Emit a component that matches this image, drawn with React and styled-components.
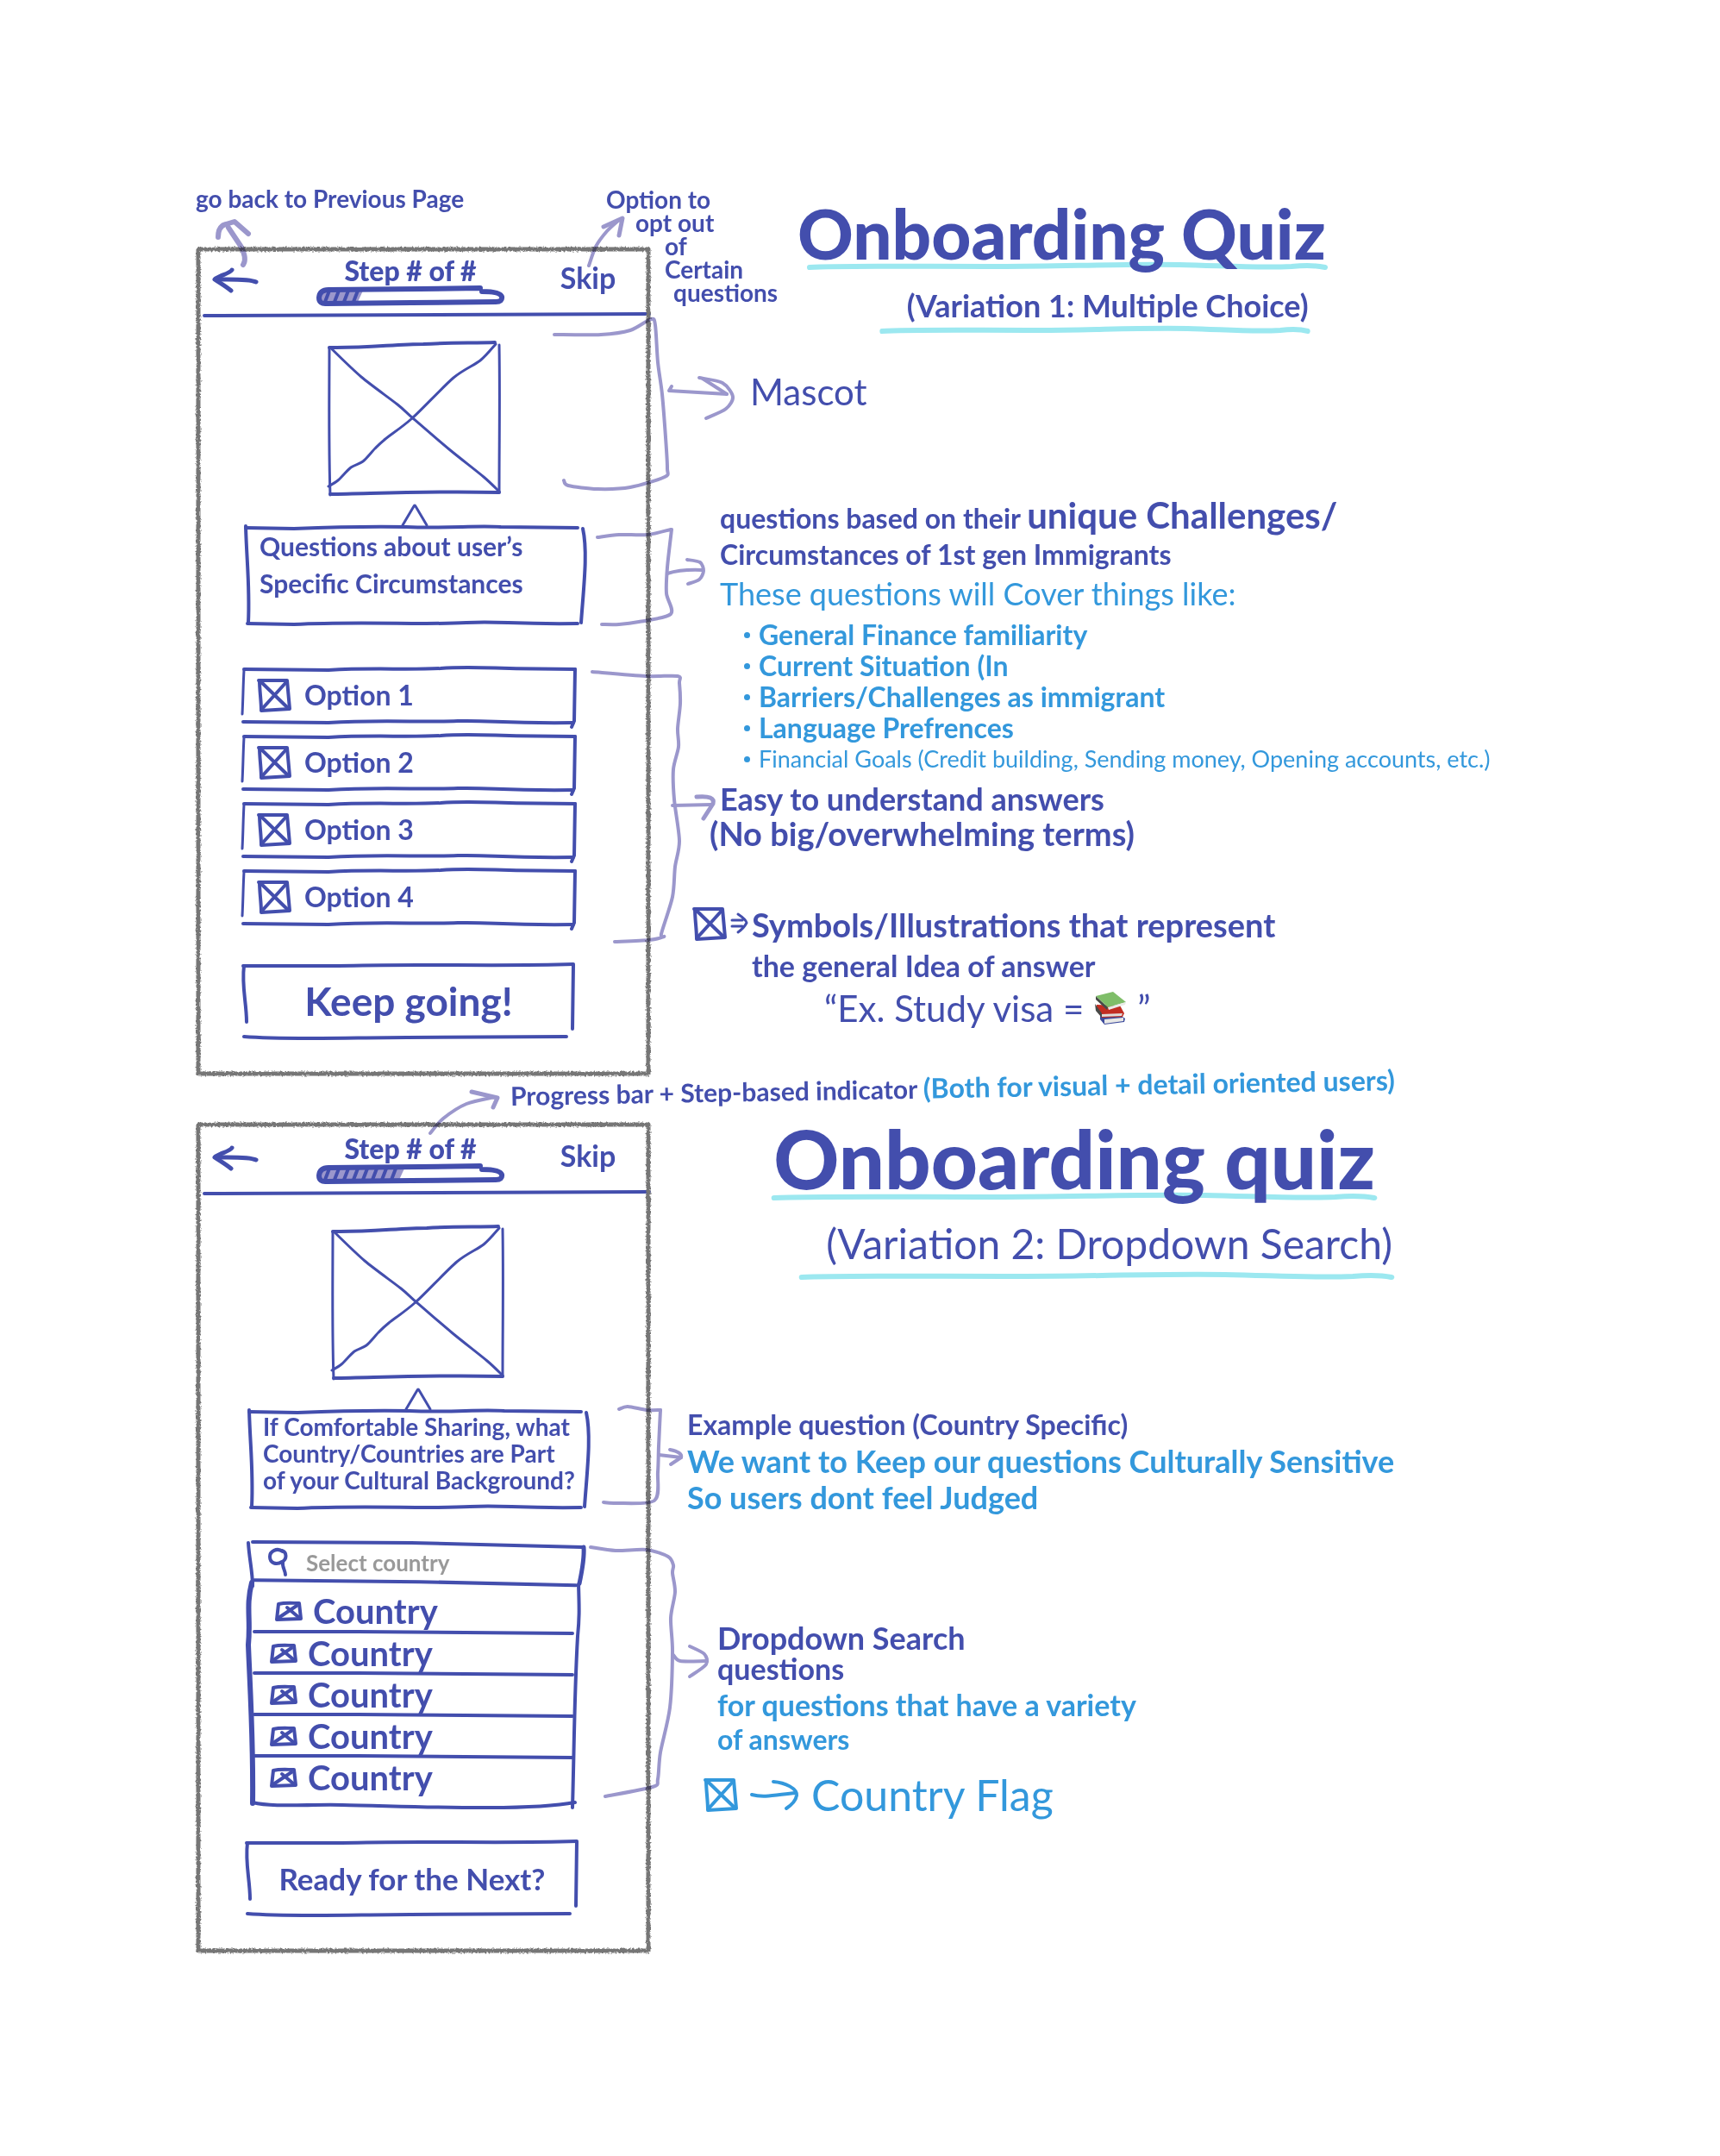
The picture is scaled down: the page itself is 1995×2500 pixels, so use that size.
import React from "react";
import styled, { createGlobalStyle, css } from "styled-components";

const ink = "#434ead";
const sky = "#3398dc";
const lilac = "#9b97cc";
const aqua = "#9ce8f0";

const GlobalStyle = createGlobalStyle`
  *, *::before, *::after { box-sizing: border-box; }
  body {
    margin: 0;
    background: #fff;
    color: ${ink};
    font-family: Lato, "Open Sans", sans-serif;
    font-weight: 700;
  }
  h1, h2, p, ul { margin: 0; padding: 0; font-weight: inherit; }
  ul { list-style: none; }
  button, input { font: inherit; color: inherit; background: none; border: 0; padding: 0; }
  button { cursor: pointer; }
  svg { display: block; overflow: visible; fill: none; stroke-linecap: round; stroke-linejoin: round; }
`;

/* Turns a list of points into one flowing pen stroke. */
function stroke(points) {
  let d = `M${points[0][0]} ${points[0][1]}`;
  for (let i = 0; i < points.length - 1; i++) {
    const a = points[i - 1] || points[i];
    const b = points[i];
    const c = points[i + 1];
    const e = points[i + 2] || c;
    d += ` C${b[0] + (c[0] - a[0]) / 7} ${b[1] + (c[1] - a[1]) / 7} ${c[0] - (e[0] - b[0]) / 7} ${c[1] - (e[1] - b[1]) / 7} ${c[0]} ${c[1]}`;
  }
  return d;
}

const Board = styled.main`
  min-width: 1760px;
  padding: 206px 120px 237px 227px;
`;

const Variation = styled.section`
  position: relative;
  display: grid;
  grid-template-columns: 528px minmax(0, 1fr);
`;

const PhoneColumn = styled.div`
  display: flex;
  flex-direction: column;
`;

const Notes = styled.div`
  display: flex;
  flex-direction: column;
  align-items: flex-start;
  white-space: nowrap;
`;

const Marks = styled.svg`
  position: absolute;
  top: 0;
  left: 0;
  pointer-events: none;
  mix-blend-mode: multiply;
`;

/* ---------- phone ---------- */

const PhoneShell = styled.article`
  position: relative;
  padding-bottom: 44px;
`;

const Outline = styled.svg`
  position: absolute;
  inset: 0;
  width: 100%;
  height: 100%;
  pointer-events: none;
`;

const TopBar = styled.header`
  display: grid;
  grid-template-columns: 52px 1fr 70px;
  align-items: start;
  padding: ${(p) => (p.$roomy ? 21 : 18)}px 38px 8px 20px;
`;

const BackButton = styled.button`
  margin-top: 8px;
`;

const SkipButton = styled.button`
  margin-top: 4px;
  font-size: 34px;
  line-height: 28px;
`;

const StepGroup = styled.div`
  display: flex;
  flex-direction: column;
  align-items: center;
  gap: 8px;
  padding-left: 6px;
`;

const StepText = styled.p`
  font-size: 32px;
  line-height: 20px;
  font-weight: 900;
`;

const HeaderRule = styled.svg`
  width: calc(100% - 10px);
  height: 4px;
  margin-left: 9px;
`;

const Body = styled.div`
  display: flex;
  flex-direction: column;
  align-items: center;
  padding: ${(p) => (p.$roomy ? "37px 70px 0 58px" : "30px 74px 0 54px")};
`;

const Pointer = styled.svg`
  margin-top: 10px;
`;

const Speech = styled.div`
  position: relative;
  width: 100%;
  height: 114px;
  padding: ${(p) => (p.$small ? "4px 20px" : "2px 20px")};
  font-size: ${(p) => (p.$small ? 28 : 30)}px;
  line-height: ${(p) => (p.$small ? 31 : 43)}px;
  white-space: nowrap;
`;

const Options = styled.ul`
  display: flex;
  flex-direction: column;
  gap: 14px;
  width: 388px;
  margin: 50px 12px 46px 0;
`;

const OptionButton = styled.button`
  position: relative;
  display: flex;
  align-items: center;
  gap: 16px;
  width: 100%;
  height: 64px;
  padding: 0 18px;
  font-size: 32px;
  line-height: 40px;
`;

const ActionButton = styled.button`
  position: relative;
  width: 384px;
  height: 86px;
  margin-right: 14px;
  font-size: ${(p) => p.$size}px;
  line-height: 48px;
  text-align: center;
`;

const Dropdown = styled.div`
  position: relative;
  width: 392px;
  margin: 38px 4px 42px 0;
`;

const SearchField = styled.label`
  display: flex;
  align-items: center;
  gap: 20px;
  height: 49px;
  padding: 0 24px;
`;

const SearchInput = styled.input`
  width: 260px;
  font-size: 26px;
  line-height: 32px;
  outline: 0;
  &::placeholder { color: #999; opacity: 1; }
`;

const Countries = styled.ul`
  padding-bottom: 8px;
`;

const CountryItem = styled.li`
  position: relative;
  height: 48px;
  padding-left: 26px;
  &:first-child { height: 57px; padding-left: 32px; padding-top: 8px; }
`;

const CountryButton = styled.button`
  display: flex;
  align-items: center;
  gap: 12px;
  height: 48px;
  font-size: 40px;
  line-height: 48px;
`;

const RowRule = styled.svg`
  position: absolute;
  left: 8px;
  bottom: -2px;
  width: 370px;
  height: 4px;
`;

/* ---------- notes ---------- */

const BackNote = styled.p`
  height: 80px;
  padding-top: 6px;
  font-size: 28px;
  line-height: 36px;
`;

const HeadRow = styled.div`
  display: flex;
`;

const SkipNote = styled.p`
  width: 222px;
  margin-left: -52px;
  padding-top: 12px;
  font-size: 28px;
  line-height: 27px;
`;

const SkipLine = styled.span`
  display: block;
  padding-left: ${(p) => p.$indent}px;
`;

const TitleBlock = styled.div`
  display: flex;
  flex-direction: column;
  align-items: flex-end;
  padding-top: ${(p) => (p.$large ? 0 : 28)}px;
  padding-left: ${(p) => (p.$large ? 142 : 0)}px;
`;

const Title = styled.h1`
  position: relative;
  z-index: 1;
  font-weight: 900;
  font-size: ${(p) => (p.$large ? 94 : 80)}px;
  line-height: ${(p) => (p.$large ? 84 : 72)}px;
`;

const SubtitleBlock = styled.div`
  display: flex;
  flex-direction: column;
  align-items: flex-end;
  margin-top: 16px;
  margin-right: ${(p) => (p.$large ? -20 : 20)}px;
`;

const Subtitle = styled.h2`
  position: relative;
  z-index: 1;
  font-size: ${(p) => (p.$large ? 48 : 36)}px;
  line-height: ${(p) => (p.$large ? 70 : 52)}px;
  font-weight: ${(p) => (p.$large ? 400 : 700)};
`;

const UnderlineSvg = styled.svg`
  width: ${(p) => p.$width}px;
  height: 6px;
`;

const Note = styled.div`
  margin-top: ${(p) => p.$space}px;
  padding-left: ${(p) => p.$indent}px;
`;

const Line = styled.p`
  font-size: ${(p) => p.$size}px;
  line-height: ${(p) => p.$leading}px;
  ${(p) => p.$sky && css`color: ${sky};`}
  ${(p) => p.$light && css`font-weight: 400;`}
`;

const Bigger = styled.span`
  font-size: 42px;
`;

const Topics = styled.ul`
  margin-top: 6px;
  padding-left: 108px;
  color: ${sky};
`;

const Topic = styled.li`
  display: flex;
  align-items: center;
  gap: 10px;
  font-size: ${(p) => (p.$small ? 27 : 32)}px;
  font-weight: ${(p) => (p.$small ? 400 : 700)};
  line-height: 36px;
  &::before {
    content: "";
    width: 7px;
    height: 7px;
    border-radius: 50%;
    background: ${sky};
  }
`;

const SymbolNote = styled.div`
  display: grid;
  grid-template-columns: 40px 20px auto;
  column-gap: 4px;
  margin-top: 62px;
  padding-left: 49px;
  svg { margin-top: 4px; }
`;

const Example = styled.p`
  display: flex;
  align-items: center;
  gap: 12px;
  padding-left: 84px;
  font-size: 42px;
  line-height: 50px;
  font-weight: 400;
  svg { margin-top: 0; }
`;

const FlagNote = styled.p`
  display: flex;
  align-items: center;
  gap: 16px;
  margin-top: 16px;
  padding-left: 62px;
  color: ${sky};
  font-size: 50px;
  line-height: 56px;
  font-weight: 400;
`;

const ProgressNote = styled.p`
  height: 53px;
  padding: 4px 0 0 365px;
  font-size: 30px;
  line-height: 36px;
  white-space: nowrap;
  transform: rotate(-1deg);
  transform-origin: 365px 22px;
`;

const SkyText = styled.span`
  color: ${sky};
  font-size: 32px;
`;

/* ---------- drawings ---------- */

function PencilFrame() {
  return (
    <Outline viewBox="0 0 528 962" preserveAspectRatio="none" aria-hidden="true">
      <defs>
        <filter id="pencil" x="-2%" y="-2%" width="104%" height="104%">
          <feTurbulence type="fractalNoise" baseFrequency="0.45" numOctaves="2" seed="4" result="n" />
          <feDisplacementMap in="SourceGraphic" in2="n" scale="4" />
        </filter>
      </defs>
      <rect x="3" y="3" width="522" height="956" stroke="#767676" strokeWidth="5" filter="url(#pencil)" />
    </Outline>
  );
}

function BoxSketch({ kind }) {
  const shapes = {
    speech: [
      [4, "M4 2 L60 3 C110 1 140 0 190 1 C240 3 270 -1 300 1 L389 2"],
      [4, "M4 0 C5 40 9 70 7 112"],
      [4, "M395 3 C401 30 396 70 393 112"],
      [4, "M6 113 L60 114 C140 110 210 115 260 112 C300 110 310 114 389 113"],
    ],
    option: [
      [4, "M2 2 L100 3 C150 0 190 3 230 1 C270 -2 290 2 386 2"],
      [3, "M2 3 C1 20 1 35 0 54"],
      [4, "M386 2 L385 62 L382 69"],
      [4, "M1 63 L100 64 C160 60 210 64 250 62 C290 61 300 65 384 64"],
    ],
    action: [
      [4, "M0 2 L110 2 C200 -1 290 3 383 0"],
      [4, "M1 2 C-2 25 4 45 4 67"],
      [4, "M383 1 L382 75"],
      [4, "M1 84 C50 88 130 85 190 85 L375 84"],
    ],
  };
  const box = { speech: "0 0 400 114", option: "0 0 388 64", action: "0 0 384 86" }[kind];
  return (
    <Outline viewBox={box} preserveAspectRatio="none" stroke={ink} aria-hidden="true">
      {shapes[kind].map(([w, d]) => (
        <path key={d} d={d} strokeWidth={w} />
      ))}
    </Outline>
  );
}

function DropdownSketch() {
  return (
    <Outline viewBox="0 0 392 305" preserveAspectRatio="none" stroke={ink} aria-hidden="true">
      <path strokeWidth="4" d="M6 1 L190 2 L388 7" />
      <path strokeWidth="4" d="M1 2 C2 20 6 35 6 52" />
      <path strokeWidth="6" d="M5 48 C-2 75 4 90 1 120 C3 170 7 230 6 303" />
      <path strokeWidth="5" d="M390 7 C391 20 388 35 385 49" />
      <path strokeWidth="4" d="M384 50 C385 80 385 90 383 110 C379 180 379 240 377 308" />
      <path strokeWidth="4" d="M8 45 L200 47 L381 51" />
      <path strokeWidth="4" d="M6 302 C30 308 70 304 110 305 C180 306 320 313 380 302" />
    </Outline>
  );
}

function BackArrow() {
  return (
    <svg width="52" height="26" stroke={ink} strokeWidth="5" aria-hidden="true">
      <path d="M50 15 C42 11 20 12 3 12" />
      <path d="M22 1 C20 5 6 8 2 12 C8 16 15 20 21 25" />
    </svg>
  );
}

function ProgressSketch({ filled }) {
  const slashes = [];
  for (let x = 12; x < filled; x += 11) slashes.push(x);
  return (
    <svg width="218" height="23" aria-hidden="true">
      <path d={`M6 5 L${filled + 4} 5 L${filled - 2} 18 L6 18 Z`} fill={lilac} />
      <g stroke={ink} strokeWidth="4">
        {slashes.map((x) => (
          <path key={x} d={`M${x + 3} 5 L${x - 2} 18`} />
        ))}
      </g>
      <g stroke={ink} strokeWidth="6">
        <path d="M190 2 L120 3 L14 4 Q4 4 3 13 Q3 21 12 20 L110 19 L208 18 Q216 18 215 12 Q213 6 192 6" />
      </g>
    </svg>
  );
}

function MascotPlaceholder() {
  return (
    <svg width="200" height="178" stroke={ink} strokeWidth="3" role="img" aria-label="Mascot">
      <path strokeWidth="4" d="M1 6 C40 7 80 2 110 2 C140 0 170 1 193 0" />
      <path d="M1 6 C1 60 0 120 2 177" />
      <path d="M198 3 C199 60 198 120 198 174" />
      <path strokeWidth="4" d="M2 176 C60 175 120 172 198 174" />
      <path d={stroke([[2, 6], [38, 40], [80, 72], [98, 88], [140, 124], [180, 156], [198, 173]])} />
      <path d={stroke([[194, 2], [176, 21], [145, 41], [97, 88], [66, 112], [54, 123], [40, 138], [26, 145], [11, 160], [0, 167]])} />
    </svg>
  );
}

function CrossBox({ size = 38, color = ink }) {
  return (
    <svg width={size} height={size} viewBox="0 0 38 38" stroke={color} strokeWidth="4" aria-hidden="true">
      <path d="M1 2 L34 2 L37 35 L4 37 C4 25 2 14 2 2" />
      <path d="M2 2 L35 34 M33 4 L5 35" />
    </svg>
  );
}

function FlagBox() {
  return (
    <svg width="32" height="24" stroke={ink} strokeWidth="4" aria-hidden="true">
      <path d="M4 4 C12 2 20 3 28 3 L30 21 L2 22 L4 4" />
      <path d="M14 8 L27 19 M25 6 L4 20" />
    </svg>
  );
}

function Magnifier() {
  return (
    <svg width="24" height="34" stroke={ink} strokeWidth="4" aria-hidden="true">
      <path d="M17 4 C10 -1 2 4 2 10 C2 18 10 20 16 16 C22 13 22 5 16 3" />
      <path d="M17 16 C16 22 20 26 20 31" />
    </svg>
  );
}

function Underline({ width }) {
  return (
    <UnderlineSvg $width={width} viewBox="0 0 600 6" preserveAspectRatio="none" stroke={aqua} strokeWidth="6" aria-hidden="true">
      <path d="M1 4 C40 2 120 3 220 3 C300 3 350 0 430 1 C480 2 520 5 560 3 C580 1 590 2 599 4" />
    </UnderlineSvg>
  );
}

function Books() {
  return (
    <svg width="38" height="38" role="img" aria-label="Books">
      <path fill="#3d4b9c" d="M7 26 L27 25 L36 31 L35 35 L12 38 L7 32Z" />
      <path fill="#e8e8e6" d="M12 32 L34 30 L34 34 L12 37Z" />
      <path fill="#c22d22" d="M3 15 L30 16 L35 25 L33 29 L9 30 L2 21Z" />
      <path fill="#dedcda" d="M9 26 L33 25 L32 28 L9 29Z" />
      <path fill="#474b48" d="M2 5 L16 18 L15 21 L2 9Z" />
      <path fill="#7fbe69" d="M2 5 L22 0 L37 12 L16 18Z" />
      <path fill="#e9ebe8" d="M16 18 L37 12 L36 15 L17 21Z" />
      <path fill="#474b48" d="M1 14 L9 25 L9 30 L2 22Z" />
    </svg>
  );
}

function Phone({ roomy, filled, speech, children }) {
  return (
    <PhoneShell>
      <PencilFrame />
      <TopBar $roomy={roomy}>
        <BackButton aria-label="Go back to previous page">
          <BackArrow />
        </BackButton>
        <StepGroup>
          <StepText>Step # of #</StepText>
          <ProgressSketch filled={filled} />
        </StepGroup>
        <SkipButton>Skip</SkipButton>
      </TopBar>
      <HeaderRule viewBox="0 0 518 4" preserveAspectRatio="none" stroke={ink} strokeWidth="4" aria-hidden="true">
        <path d="M1 3 L517 1" />
      </HeaderRule>
      <Body $roomy={roomy}>
        <MascotPlaceholder />
        <Pointer width="30" height="25" stroke={ink} strokeWidth="3" aria-hidden="true">
          <path d="M1 24 L14 2 Q15 0 16 2 L29 24" />
        </Pointer>
        <Speech $small={roomy}>
          <BoxSketch kind="speech" />
          {speech.map((line) => (
            <p key={line}>{line}</p>
          ))}
        </Speech>
        {children}
      </Body>
    </PhoneShell>
  );
}

const firstMarks = [
  [6, "M282 307 Q287 300 279 285 L265 264"],
  [6, "M253 275 Q253 262 262 260 L272 257 L288 271"],
  [4, stroke([[683, 308], [691, 286], [704, 268], [718, 255]])],
  [5, "M700 263 L722 253 L718 273"],
  [4, stroke([[643, 388], [697, 388], [731, 383], [755, 370], [760, 377], [763, 420], [768, 457], [772, 507], [774, 543], [771, 553], [731, 565], [693, 567], [659, 563], [654, 557]])],
  [4, "M779 448 L776 453 L843 457"],
  [4, stroke([[811, 438], [838, 444], [850, 460], [842, 474], [819, 485]])],
  [4, "M815 439 L843 457"],
  [4, stroke([[693, 623], [718, 620], [751, 620], [778, 614]])],
  [4, stroke([[779, 614], [774, 658], [773, 688], [778, 712], [741, 721], [718, 724], [698, 724]])],
  [4, "M774 665 Q790 660 814 661"],
  [4, stroke([[797, 649], [812, 652], [816, 662], [811, 672], [798, 677]])],
  [4, stroke([[687, 779], [749, 784], [786, 784], [788, 792], [789, 816], [786, 845], [787, 866], [781, 892], [782, 927], [788, 975], [783, 1005], [780, 1040], [767, 1083], [770, 1086], [753, 1090], [713, 1092]])],
  [4, "M780 934 L825 933"],
  [5, "M808 924 Q830 922 827 932 L816 949"],
];

const secondMarks = [
  [4, stroke([[499, 1314], [514, 1297], [541, 1280], [574, 1272]])],
  [5, "M547 1266 L577 1273 L572 1284"],
  [4, stroke([[718, 1634], [728, 1631], [750, 1635], [766, 1635]])],
  [4, stroke([[766, 1635], [764, 1677], [763, 1707], [759, 1740], [714, 1743], [700, 1742]])],
  [4, "M764 1687 L790 1690"],
  [4, "M777 1681 Q792 1684 790 1690 L778 1698"],
  [4, stroke([[685, 1794], [714, 1798], [750, 1797], [775, 1805], [781, 1815], [780, 1824], [783, 1846], [778, 1876], [780, 1915], [777, 1980], [766, 2032], [763, 2063], [757, 2072], [702, 2083]])],
  [4, stroke([[781, 1919], [789, 1926], [818, 1926]])],
  [4, stroke([[800, 1909], [817, 1918], [819, 1930], [800, 1944]])],
];

function Callouts({ top, height, marks }) {
  return (
    <Marks width="700" height={height} viewBox={`227 ${top} 700 ${height}`} stroke={lilac} aria-hidden="true">
      {marks.map(([w, d]) => (
        <path key={d} d={d} strokeWidth={w} />
      ))}
    </Marks>
  );
}

const topics = [
  "General Finance familiarity",
  "Current Situation (In",
  "Barriers/Challenges as immigrant",
  "Language Prefrences",
  "Financial Goals (Credit building, Sending money, Opening accounts, etc.)",
];

export default function App() {
  return (
    <>
      <GlobalStyle />
      <Board>
        <Variation>
          <PhoneColumn>
            <BackNote>go back to Previous Page</BackNote>
            <Phone filled={50} speech={["Questions about user’s", "Specific Circumstances"]}>
              <Options>
                {[1, 2, 3, 4].map((n) => (
                  <li key={n}>
                    <OptionButton>
                      <BoxSketch kind="option" />
                      <CrossBox />
                      Option {n}
                    </OptionButton>
                  </li>
                ))}
              </Options>
              <ActionButton $size={46}>
                <BoxSketch kind="action" />
                Keep going!
              </ActionButton>
            </Phone>
          </PhoneColumn>

          <Notes>
            <HeadRow>
              <SkipNote>
                <SkipLine $indent={0}>Option to</SkipLine>
                <SkipLine $indent={34}>opt out</SkipLine>
                <SkipLine $indent={68}>of</SkipLine>
                <SkipLine $indent={68}>Certain</SkipLine>
                <SkipLine $indent={78}>questions</SkipLine>
              </SkipNote>
              <TitleBlock>
                <Title>Onboarding Quiz</Title>
                <Underline width={600} />
                <SubtitleBlock>
                  <Subtitle>(Variation 1: Multiple Choice)</Subtitle>
                  <Underline width={496} />
                </SubtitleBlock>
              </TitleBlock>
            </HeadRow>
            <Note $space={44} $indent={115}>
              <Line $size={42} $leading={48} $light>Mascot</Line>
            </Note>
            <Note $space={98} $indent={80}>
              <Line $size={32} $leading={42}>
                questions based on their <Bigger>unique Challenges/</Bigger>
              </Line>
              <Line $size={32} $leading={42}>Circumstances of 1st gen Immigrants</Line>
              <Line $size={36} $leading={48} $sky $light>These questions will Cover things like:</Line>
            </Note>
            <Topics>
              {topics.map((t) => (
                <Topic key={t} $small={t.length > 40}>{t}</Topic>
              ))}
            </Topics>
            <Note $space={8} $indent={80}>
              <Line $size={36} $leading={40}>Easy to understand answers</Line>
            </Note>
            <Note $space={0} $indent={68}>
              <Line $size={38} $leading={40}>(No big/overwhelming terms)</Line>
            </Note>
            <SymbolNote>
              <CrossBox />
              <svg width="20" height="38" stroke={ink} strokeWidth="3" aria-hidden="true">
                <path d="M1 15 L13 15 M1 22 L13 22 M8 8 Q17 14 18 18 Q15 24 8 29" />
              </svg>
              <div>
                <Line $size={38} $leading={48}>Symbols/Illustrations that represent</Line>
                <Line $size={34} $leading={48}>the general Idea of answer</Line>
                <Example>
                  <span>“Ex. Study visa =</span>
                  <Books />
                  <span>”</span>
                </Example>
              </div>
            </SymbolNote>
          </Notes>
          <Callouts top={206} height={1042} marks={firstMarks} />
        </Variation>

        <ProgressNote>
          Progress bar + Step-based indicator <SkyText>(Both for visual + detail oriented users)</SkyText>
        </ProgressNote>

        <Variation>
          <PhoneColumn>
            <Phone
              roomy
              filled={98}
              speech={["If Comfortable Sharing, what", "Country/Countries are Part", "of your Cultural Background?"]}
            >
              <Dropdown>
                <DropdownSketch />
                <SearchField>
                  <Magnifier />
                  <SearchInput type="search" aria-label="Select country" placeholder="Select country" />
                </SearchField>
                <Countries>
                  {[1, 2, 3, 4, 5].map((n) => (
                    <CountryItem key={n}>
                      <CountryButton>
                        <FlagBox />
                        Country
                      </CountryButton>
                      {n < 5 && (
                        <RowRule viewBox="0 0 370 4" preserveAspectRatio="none" stroke={ink} strokeWidth="4" aria-hidden="true">
                          <path d="M0 1 L120 1 L369 3" />
                        </RowRule>
                      )}
                    </CountryItem>
                  ))}
                </Countries>
              </Dropdown>
              <ActionButton $size={35}>
                <BoxSketch kind="action" />
                Ready for the Next?
              </ActionButton>
            </Phone>
          </PhoneColumn>

          <Notes>
            <TitleBlock $large>
              <Title $large>Onboarding quiz</Title>
              <Underline width={698} />
              <SubtitleBlock $large>
                <Subtitle $large>(Variation 2: Dropdown Search)</Subtitle>
                <Underline width={686} />
              </SubtitleBlock>
            </TitleBlock>
            <Note $space={148} $indent={42}>
              <Line $size={32} $leading={42}>Example question (Country Specific)</Line>
              <Line $size={36} $leading={42} $sky>We want to Keep our questions Culturally Sensitive</Line>
              <Line $size={36} $leading={42} $sky>So users dont feel Judged</Line>
            </Note>
            <Note $space={124} $indent={77}>
              <Line $size={36} $leading={36}>Dropdown Search</Line>
              <Line $size={34} $leading={36}>questions</Line>
            </Note>
            <Note $space={4} $indent={77}>
              <Line $size={34} $leading={40} $sky>for questions that have a variety</Line>
              <Line $size={32} $leading={40} $sky>of answers</Line>
            </Note>
            <FlagNote>
              <CrossBox size={38} color={sky} />
              <svg width="54" height="34" stroke={sky} strokeWidth="4" aria-hidden="true">
                <path d="M1 17 C15 21 30 17 52 15 M26 2 C40 3 54 10 53 18 C52 24 47 29 41 33" />
              </svg>
              Country Flag
            </FlagNote>
          </Notes>
          <Callouts top={1301} height={962} marks={secondMarks} />
        </Variation>
      </Board>
    </>
  );
}
